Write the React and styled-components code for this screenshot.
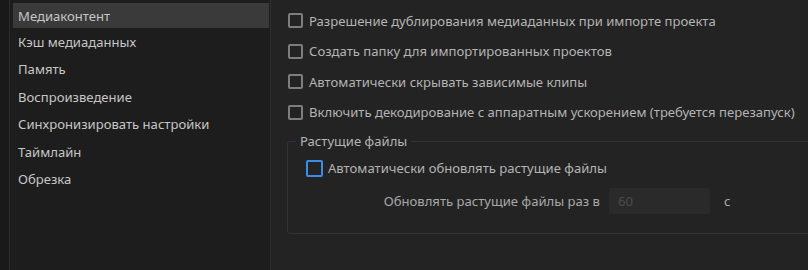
import React from 'react';
import styled, { createGlobalStyle } from 'styled-components';

const GlobalStyle = createGlobalStyle`
    html, body {
        margin: 0;
        padding: 0;
        background: #191919;
        overflow: hidden;
    }
    * {
        box-sizing: border-box;
    }
`;

const menuItems = [
    'Медиаконтент',
    'Кэш медиаданных',
    'Память',
    'Воспроизведение',
    'Синхронизировать настройки',
    'Таймлайн',
    'Обрезка',
];

// first row is scrolled above the top edge, only its box shows
const options = [
    '',
    'Разрешение дублирования медиаданных при импорте проекта',
    'Создать папку для импортированных проектов',
    'Автоматически скрывать зависимые клипы',
    'Включить декодирование с аппаратным ускорением (требуется перезапуск)',
];

function App() {
    return (
        <Window>
            <GlobalStyle />
            <Sidebar>
                {menuItems.map((item, i) => (
                    <MenuItem key={item} $active={i === 0}>{item}</MenuItem>
                ))}
            </Sidebar>
            <Content>
                <OptionList>
                    {options.map((text, i) => (
                        <OptionRow key={i}>
                            <Box />
                            <OptionText>{text}</OptionText>
                        </OptionRow>
                    ))}
                </OptionList>
                <Group>
                    <Legend>Растущие файлы</Legend>
                    <GroupRow>
                        <Box $focused />
                        <OptionText>Автоматически обновлять растущие файлы</OptionText>
                    </GroupRow>
                    <IntervalRow>
                        <FieldLabel>Обновлять растущие файлы раз в</FieldLabel>
                        <NumberField type="text" value="60" disabled readOnly />
                        <Unit>с</Unit>
                    </IntervalRow>
                </Group>
            </Content>
        </Window>
    );
}

const Window = styled.div`
    display: flex;
    width: 808px;
    height: 270px;
    overflow: hidden;
    font-family: "Noto Sans", "Open Sans", sans-serif;
    font-size: 13.1px;
    background: #191919;
`;

const Sidebar = styled.div`
    width: 262px;
    margin-left: 9px;
    flex-shrink: 0;
    display: flex;
    flex-direction: column;
    padding: 3px 1px 0 3px;
    background: #1d1d1d;
    border-left: 1px solid #2b2b2b;
    border-right: 1px solid #2f2f2f;
`;

const MenuItem = styled.div`
    height: 27.5px;
    display: flex;
    align-items: center;
    padding-left: 5px;
    color: #c6c6c6;
    white-space: nowrap;
    background: ${(p) => (p.$active ? '#3a3a3a' : 'transparent')};
    &:first-child {
        height: 25px;
    }
`;

const Content = styled.div`
    flex: 1;
    min-width: 0;
    background: #232323;
    padding-left: 16px;
    overflow: hidden;
`;

const OptionList = styled.div`
    display: flex;
    flex-direction: column;
    margin-top: -25px;
`;

const OptionRow = styled.div`
    height: 30.5px;
    display: flex;
    align-items: center;
    gap: 6px;
    padding-left: 1px;
    white-space: nowrap;
`;

const Box = styled.span`
    width: ${(p) => (p.$focused ? '17px' : '15px')};
    height: ${(p) => (p.$focused ? '17px' : '15px')};
    flex-shrink: 0;
    border: 2px solid ${(p) => (p.$focused ? '#3a8ee8' : '#7e7e7e')};
    border-radius: 2px;
    background: transparent;
`;

const OptionText = styled.span`
    color: #b4b4b4;
`;

const Group = styled.fieldset`
    margin: 4.5px 0 0 0;
    width: 560px;
    height: 102px;
    padding: 0 0 0 18px;
    border: 1px solid #333333;
    border-radius: 3px;
`;

const Legend = styled.legend`
    color: #b4b4b4;
    padding: 0 4px;
    margin-left: -10px;
    line-height: 18px;
`;

const GroupRow = styled.div`
    display: flex;
    align-items: center;
    gap: 5px;
    height: 26px;
    margin-top: 5px;
    white-space: nowrap;
`;

const IntervalRow = styled.div`
    display: flex;
    align-items: center;
    height: 26px;
    margin-top: 7px;
    white-space: nowrap;
`;

const FieldLabel = styled.span`
    width: 294px;
    text-align: right;
    color: #a8a8a8;
    margin-right: 9px;
`;

const NumberField = styled.input`
    width: 101px;
    height: 26px;
    border: none;
    outline: none;
    border-radius: 2px;
    background: #2a2a2a;
    color: #4c4c4c;
    font-family: inherit;
    font-size: 13.1px;
    padding: 0 9px;
    -webkit-text-fill-color: #4c4c4c;
    opacity: 1;
`;

const Unit = styled.span`
    color: #a8a8a8;
    margin-left: 14px;
`;

export default App;
